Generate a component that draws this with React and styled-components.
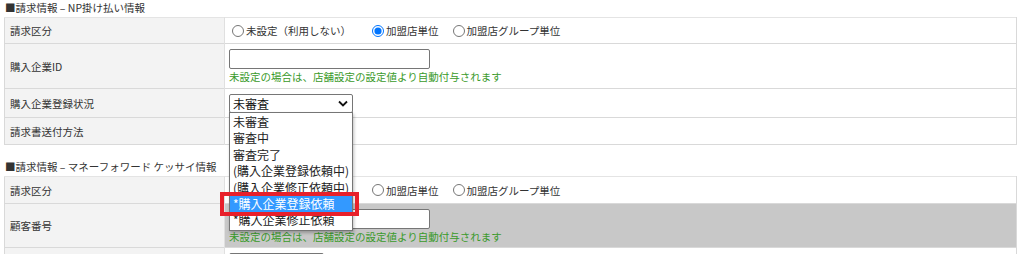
import React from 'react'
import styled, { createGlobalStyle } from 'styled-components'

const Global = createGlobalStyle`
  body {
    margin: 0;
    background: #fff;
    font-family: "Noto Sans CJK JP", "Noto Sans", sans-serif;
    color: #333;
  }
`

const Page = styled.div`
  position: relative;
  width: 1024px;
  height: 254px;
  overflow: hidden;
  padding-left: 4px;
  box-sizing: border-box;
`

const SectionTitle = styled.div`
  font-size: 10.5px;
  height: 17px;
  line-height: 16px;
  padding-left: 1px;
  margin-top: ${p => p.$top || 0}px;
  color: #333;
`

const Table = styled.table`
  width: 1013px;
  border-collapse: collapse;
  border: 1px solid #d9d9d9;
  border-top-color: #e4e4e4;
  font-size: 10.5px;
`

const Row = styled.tr`
  height: ${p => p.$h}px;
  border-bottom: 1px solid #d9d9d9;
`

const Label = styled.td`
  width: 214px;
  background: #f3f3f3;
  border-right: 1px solid #e0e0e0;
  padding: 0 0 0 5px;
  vertical-align: middle;
`

const Value = styled.td`
  padding: 0 0 0 4px;
  vertical-align: middle;
  background: ${p => (p.$gray ? '#c8c8c8' : '#fff')};
`

const RadioGroup = styled.div`
  display: flex;
  align-items: center;
`

const RadioLabel = styled.label`
  display: flex;
  align-items: center;
  margin-right: ${p => p.$gap}px;
`

const Radio = styled.input`
  width: 12px;
  height: 12px;
  margin: 0 2px 0 3px;
  accent-color: #0075ff;
`

const TextInput = styled.input`
  display: block;
  width: 201px;
  height: 20px;
  box-sizing: border-box;
  border: 1px solid #767676;
  border-radius: 2px;
  margin: 0;
`

const Note = styled.div`
  color: #3a9a2a;
  margin-top: 1px;
  line-height: 13px;
`

const SelectBox = styled.div`
  width: ${p => p.$w}px;
  height: 19px;
  box-sizing: border-box;
  border: 1px solid #767676;
  border-radius: 2px;
  display: flex;
  align-items: center;
  justify-content: space-between;
  padding: 0 4px 0 3px;
  font-size: 12px;
  color: #111;
  background: #fff;
`

const Dropdown = styled.ul`
  position: absolute;
  left: 229px;
  top: 112px;
  width: 124px;
  margin: 0;
  padding: 1px 0;
  list-style: none;
  box-sizing: border-box;
  background: #fff;
  border: 1px solid #767676;
  box-shadow: 1px 2px 3px rgba(0, 0, 0, 0.25);
  font-size: 12px;
  z-index: 2;
`

const Option = styled.li`
  height: 16.4px;
  line-height: 16px;
  padding-left: 3px;
  color: ${p => (p.$active ? '#fff' : '#222')};
  background: ${p => (p.$active ? '#3399ff' : 'transparent')};
`

const Highlight = styled.div`
  position: absolute;
  left: 220px;
  top: 192px;
  width: 139px;
  height: 24px;
  box-sizing: border-box;
  border: 4px solid #e8202a;
  z-index: 3;
`

const Chevron = () => (
  <svg width="10" height="7" viewBox="0 0 10 7">
    <path d="M1 1.5 L5 5.5 L9 1.5" fill="none" stroke="#111" strokeWidth="1.8" />
  </svg>
)

const options = [
  '未審査',
  '審査中',
  '審査完了',
  '(購入企業登録依頼中)',
  '(購入企業修正依頼中)',
  '*購入企業登録依頼',
  '*購入企業修正依頼',
]

function Radios({ name, checked }) {
  return (
    <RadioGroup>
      <RadioLabel $gap={18}>
        <Radio type="radio" name={name} defaultChecked={checked === 0} />
        未設定（利用しない）
      </RadioLabel>
      <RadioLabel $gap={11}>
        <Radio type="radio" name={name} defaultChecked={checked === 1} />
        加盟店単位
      </RadioLabel>
      <RadioLabel $gap={0}>
        <Radio type="radio" name={name} defaultChecked={checked === 2} />
        加盟店グループ単位
      </RadioLabel>
    </RadioGroup>
  )
}

export default function App() {
  return (
    <Page>
      <Global />
      <SectionTitle>■請求情報 – NP掛け払い情報</SectionTitle>
      <Table>
        <tbody>
          <Row $h={26}>
            <Label>請求区分</Label>
            <Value><Radios name="np" checked={1} /></Value>
          </Row>
          <Row $h={45}>
            <Label>購入企業ID</Label>
            <Value>
              <TextInput type="text" />
              <Note>未設定の場合は、店舗設定の設定値より自動付与されます</Note>
            </Value>
          </Row>
          <Row $h={29}>
            <Label>購入企業登録状況</Label>
            <Value>
              <SelectBox $w={124}>未審査<Chevron /></SelectBox>
            </Value>
          </Row>
          <Row $h={27}>
            <Label>請求書送付方法</Label>
            <Value />
          </Row>
        </tbody>
      </Table>

      <SectionTitle $top={14}>■請求情報 – マネーフォワード ケッサイ情報</SectionTitle>
      <Table>
        <tbody>
          <Row $h={27}>
            <Label>請求区分</Label>
            <Value><Radios name="mf" checked={-1} /></Value>
          </Row>
          <Row $h={44}>
            <Label>顧客番号</Label>
            <Value $gray>
              <TextInput type="text" />
              <Note>未設定の場合は、店舗設定の設定値より自動付与されます</Note>
            </Value>
          </Row>
          <Row $h={30}>
            <Label />
            <Value>
              <SelectBox $w={95} />
            </Value>
          </Row>
        </tbody>
      </Table>

      <Dropdown>
        {options.map((o, i) => (
          <Option key={o} $active={i === 5}>{o}</Option>
        ))}
      </Dropdown>
      <Highlight />
    </Page>
  )
}
